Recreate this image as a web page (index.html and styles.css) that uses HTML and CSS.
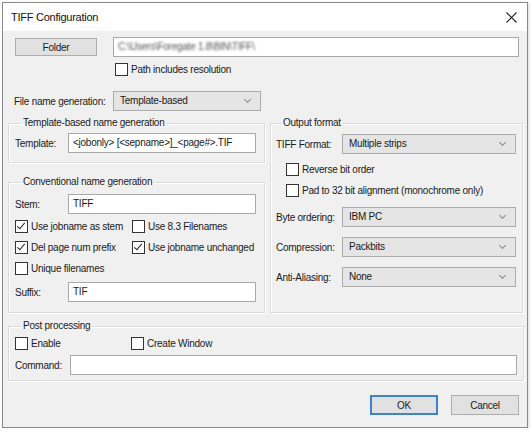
FILE: index.html
```html
<!DOCTYPE html>
<html lang="en">
<head>
    <meta charset="UTF-8">
    <title>TIFF Configuration</title>
    <link rel="stylesheet" href="styles.css">
</head>
<body>
    <div class="dialog">
        <div class="titlebar">
            <span class="title">TIFF Configuration</span>
            <svg class="close" width="11" height="11" viewBox="0 0 11 11">
                <path d="M0.5 0.5 L10.5 10.5 M10.5 0.5 L0.5 10.5" stroke="#222" stroke-width="1.1" fill="none"/>
            </svg>
        </div>

        <div class="content">
            <div class="folder-row">
                <button class="btn folder-btn">Folder</button>
                <div class="input path-input"><span class="blurred">C:\Users\Foregate 1.8\BIN\TIFF\</span></div>
            </div>

            <label class="check path-check"><span class="box"></span>Path includes resolution</label>

            <div class="gen-row">
                <span class="lbl gen-lbl">File name generation:</span>
                <div class="select gen-select">Template-based</div>
            </div>

            <div class="columns">
                <div class="left-col">
                    <fieldset class="group template-group">
                        <legend>Template-based name generation</legend>
                        <div class="field-row">
                            <span class="lbl">Template:</span>
                            <div class="input">&lt;jobonly&gt; [&lt;sepname&gt;]_&lt;page#&gt;.TIF</div>
                        </div>
                    </fieldset>

                    <fieldset class="group conv-group">
                        <legend>Conventional name generation</legend>
                        <div class="field-row">
                            <span class="lbl">Stem:</span>
                            <div class="input">TIFF</div>
                        </div>
                        <div class="check-grid">
                            <label class="check"><span class="box checked"></span>Use jobname as stem</label>
                            <label class="check"><span class="box"></span>Use 8.3 Filenames</label>
                            <label class="check"><span class="box checked"></span>Del page num prefix</label>
                            <label class="check"><span class="box checked"></span>Use jobname unchanged</label>
                            <label class="check"><span class="box"></span>Unique filenames</label>
                        </div>
                        <div class="field-row suffix-row">
                            <span class="lbl">Suffix:</span>
                            <div class="input">TIF</div>
                        </div>
                    </fieldset>
                </div>

                <fieldset class="group output-group">
                    <legend>Output format</legend>
                    <div class="field-row">
                        <span class="lbl">TIFF Format:</span>
                        <div class="select">Multiple strips</div>
                    </div>
                    <label class="check out-check first"><span class="box"></span>Reverse bit order</label>
                    <label class="check out-check"><span class="box"></span>Pad to 32 bit alignment (monochrome only)</label>
                    <div class="field-row byte-row">
                        <span class="lbl">Byte ordering:</span>
                        <div class="select">IBM PC</div>
                    </div>
                    <div class="field-row spaced">
                        <span class="lbl">Compression:</span>
                        <div class="select">Packbits</div>
                    </div>
                    <div class="field-row spaced">
                        <span class="lbl">Anti-Aliasing:</span>
                        <div class="select">None</div>
                    </div>
                </fieldset>
            </div>

            <fieldset class="group post-group">
                <legend>Post processing</legend>
                <div class="post-checks">
                    <label class="check"><span class="box"></span>Enable</label>
                    <label class="check"><span class="box"></span>Create Window</label>
                </div>
                <div class="field-row command-row">
                    <span class="lbl">Command:</span>
                    <div class="input"></div>
                </div>
            </fieldset>

            <div class="buttons">
                <button class="btn ok-btn">OK</button>
                <button class="btn">Cancel</button>
            </div>
        </div>
    </div>
</body>
</html>
```

FILE: styles.css
```css
body {
    margin: 0;
    background: #fff;
    font-family: "Liberation Sans", Arial, sans-serif;
    font-size: 10px;
    letter-spacing: -0.25px;
    color: #1a1a1a;
}
.dialog {
    margin: 2px 0 0 2px;
    width: 524px;
    border: 1px solid #8a8a8a;
    background: #f0f0f0;
    box-shadow: 1px 1px 3px rgba(0,0,0,0.15);
}
.titlebar {
    height: 28px;
    background: #fff;
    display: flex;
    align-items: center;
    justify-content: space-between;
    padding: 0 10px 0 8px;
}
.title {
    font-size: 11px;
    color: #111;
}
.close {
    margin-top: 1px;
}
.content {
    padding-bottom: 12px;
}

/* generic controls */
.btn {
    font: inherit;
    letter-spacing: inherit;
    color: #1a1a1a;
    background: #e1e1e1;
    border: 1px solid #adadad;
    height: 18px;
    padding: 0;
    width: 68px;
}
.input {
    flex: 1;
    height: 20px;
    box-sizing: border-box;
    background: #fff;
    border: 1px solid #a9a9a9;
    padding-left: 4px;
    line-height: 18px;
    white-space: nowrap;
    overflow: hidden;
}
.select {
    flex: 1;
    height: 20px;
    box-sizing: border-box;
    background: #e5e5e5;
    border: 1px solid #acacac;
    padding-left: 6px;
    line-height: 18px;
    position: relative;
}
.select::after {
    content: "";
    position: absolute;
    right: 10px;
    top: 5px;
    width: 4px;
    height: 4px;
    border-right: 1px solid #8a8a8a;
    border-bottom: 1px solid #8a8a8a;
    transform: rotate(45deg);
}
.check {
    display: flex;
    align-items: center;
    height: 14px;
    white-space: nowrap;
}
.box {
    width: 11px;
    height: 11px;
    border: 1px solid #333;
    background: #fff;
    margin-right: 3px;
    flex: none;
    position: relative;
}
.box.checked::after {
    content: "";
    position: absolute;
    left: 3px;
    top: 0px;
    width: 3px;
    height: 7px;
    border-right: 1px solid #222;
    border-bottom: 1px solid #222;
    transform: rotate(40deg);
}
.lbl {
    flex: none;
}
.field-row {
    display: flex;
    align-items: center;
}

/* top rows */
.folder-row {
    display: flex;
    align-items: center;
    margin: 6px 8px 0 12px;
}
.folder-btn {
    width: 82px;
    margin-right: 16px;
}
.blurred {
    color: #555;
    filter: blur(1.2px);
}
.path-check {
    margin: 5px 0 0 112px;
}
.gen-row {
    display: flex;
    align-items: center;
    margin: 15px 0 0 11px;
}
.gen-lbl {
    width: 99px;
}
.gen-select {
    flex: none;
    width: 148px;
}

/* group boxes */
.group {
    margin: 0;
    min-width: 0;
    border: 1px solid #dcdcdc;
    box-shadow: inset 1px 1px 0 #fff, 1px 1px 0 #fff;
}
.group legend {
    padding: 0 2px;
    margin-left: 6px;
    line-height: 12px;
}
.columns {
    display: flex;
    gap: 5px;
    margin: 6px 0 0 5px;
}
.left-col {
    width: 257px;
}
.template-group {
    padding: 4px 8px 9px 6px;
}
.template-group .lbl,
.conv-group .lbl {
    width: 53px;
}
.conv-group {
    margin-top: 13px;
    padding: 6px 8px 10px 6px;
}
.check-grid {
    display: grid;
    grid-template-columns: 117px auto;
    row-gap: 7px;
    margin-top: 5px;
}
.suffix-row {
    margin-top: 7px;
}
.output-group {
    width: 253px;
    box-sizing: border-box;
    padding: 5px 6px 0 5px;
}
.output-group legend {
    margin-left: 5px;
}
.output-group .lbl {
    width: 66px;
}
.out-check {
    margin-left: 10px;
    margin-top: 7px;
}
.out-check.first {
    margin-top: 8px;
}
.byte-row {
    margin-top: 10px;
}
.spaced {
    margin-top: 10px;
}
.post-group {
    margin: 7px 3px 0 5px;
    padding: 4px 6px 5px 6px;
}
.post-checks {
    display: grid;
    grid-template-columns: 116px auto;
}
.command-row {
    margin-top: 5px;
}
.command-row .lbl {
    width: 55px;
}
.buttons {
    display: flex;
    justify-content: flex-end;
    gap: 13px;
    margin: 14px 8px 0 0;
}
.buttons .btn {
    height: 20px;
}
.ok-btn {
    border: 2px solid #3c84d0;
}
```
